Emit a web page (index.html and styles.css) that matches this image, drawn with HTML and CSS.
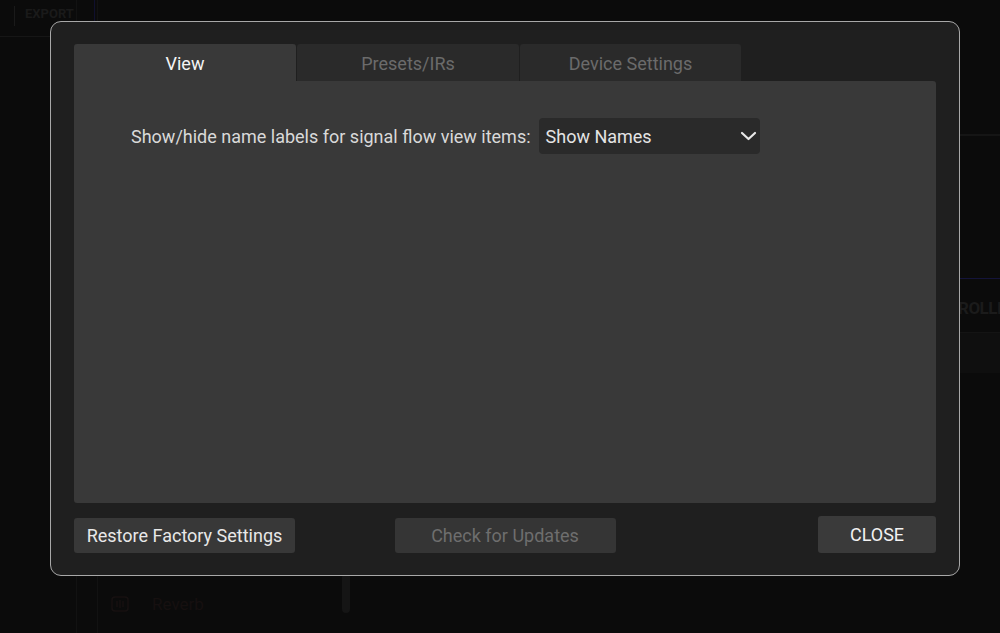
FILE: index.html
```html
<!DOCTYPE html>
<html>
<head>
<meta charset="utf-8">
<title>Settings</title>
<link rel="stylesheet" href="styles.css">
</head>
<body>
<div class="app">
  <aside class="sidebar">
    <div class="sb-head"><span class="sb-sep"></span><span class="sb-b">EXPORT</span></div>
    <div class="sb-body"></div>
  </aside>
  <div class="rail"><div class="rail-accent"></div></div>
  <main class="main">
    <div class="main-mid">
      <div class="mid-center"></div>
      <div class="mid-right">
        <div class="mr-head"></div>
        <div class="mr-accent"></div>
        <div class="mr-title">ROLLI</div>
        <div class="mr-box"></div>
      </div>
    </div>
    <div class="main-bottom">
      <div class="fx-row">
        <svg class="fx-icon" width="20" height="20" viewBox="0 0 20 20"><rect x="2" y="3" width="16" height="14" rx="3" fill="none" stroke="#171111" stroke-width="1.5"/><path d="M7 7v6M10 6v8M13 7v6" stroke="#171111" stroke-width="1.5"/></svg>
        <span class="fx-name">Reverb</span>
      </div>
      <div class="scroll"></div>
    </div>
  </main>
</div>

<div class="dialog">
  <div class="tabs">
    <div class="tab active">View</div>
    <div class="tab">Presets/IRs</div>
    <div class="tab last">Device Settings</div>
  </div>
  <div class="panel">
    <div class="row">
      <span class="label">Show/hide name labels for signal flow view items:</span>
      <div class="select">
        <span class="select-text">Show Names</span>
        <svg class="chev" width="17" height="10" viewBox="0 0 17 10"><path d="M2 2l6.5 6 6.5-6" fill="none" stroke="#e8e8e8" stroke-width="2.2" stroke-linecap="round" stroke-linejoin="round"/></svg>
      </div>
    </div>
  </div>
  <div class="footer">
    <button class="btn restore">Restore Factory Settings</button>
    <button class="btn check">Check for Updates</button>
    <button class="btn close">CLOSE</button>
  </div>
</div>
</body>
</html>
```

FILE: styles.css
```css
html, body {
  margin: 0;
  padding: 0;
}
body {
  width: 1000px;
  height: 633px;
  overflow: hidden;
  background: #0b0b0b;
  font-family: Roboto, "Liberation Sans", sans-serif;
  position: relative;
}

/* background app (faint) */
.app {
  display: flex;
  height: 633px;
}
.sidebar {
  width: 76px;
  border-right: 1px solid #121212;
  display: flex;
  flex-direction: column;
}
.sb-head {
  height: 37px;
  border-bottom: 1px solid #161616;
  display: flex;
  align-items: flex-start;
  padding: 6px 0 0 14px;
  box-sizing: border-box;
  font-size: 13px;
  font-weight: 700;
  color: #1a1a1a;
}
.sb-sep { width: 1px; height: 20px; background: #1a1a1a; margin: 0 10px 0 0; }
.rail {
  width: 20px;
  border-right: 1px solid #121212;
  position: relative;
}
.rail-accent {
  position: absolute;
  right: 2px;
  top: 0;
  width: 1px;
  height: 22px;
  background: #10102e;
}
.main {
  flex: 1;
  display: flex;
  flex-direction: column;
}
.main-mid {
  flex: 1;
  display: flex;
}
.mid-center { flex: 1; }
.mid-right {
  width: 42px;
  display: flex;
  flex-direction: column;
}
.mr-head {
  height: 134px;
  border-bottom: 2px solid #151515;
}
.mr-accent {
  margin-top: 142px;
  height: 1px;
  background: #14143a;
}
.mr-title {
  margin-top: 19px;
  font-size: 17px;
  font-weight: 700;
  color: #1b1b1b;
  letter-spacing: -0.5px;
  white-space: nowrap;
  overflow: hidden;
}
.mr-box {
  margin-top: 14px;
  height: 40px;
  background: #0f0f0f;
  border-top: 1px solid #141414;
}
.main-bottom {
  height: 60px;
  display: flex;
  align-items: flex-start;
}
.fx-row {
  display: flex;
  align-items: center;
  gap: 22px;
  margin-left: 12px;
  margin-top: 21px;
  width: 232px;
}
.fx-name {
  font-size: 17px;
  color: #161010;
}
.scroll {
  width: 8px;
  height: 40px;
  border-radius: 4px;
  background: #151515;
}

/* dialog */
.dialog {
  position: absolute;
  left: 50px;
  top: 21px;
  width: 910px;
  height: 555px;
  box-sizing: border-box;
  border: 1px solid #a8a8a8;
  border-radius: 11px;
  background: #1f1f1f;
  padding: 22px 23px 22px 23px;
  display: flex;
  flex-direction: column;
}
.tabs {
  display: flex;
  gap: 1px;
  height: 37px;
  flex: none;
}
.tab {
  width: 222px;
  background: #2a2a2a;
  border-radius: 3px 3px 0 0;
  color: #6b6b6b;
  font-size: 18px;
  font-weight: 400;
  display: flex;
  align-items: center;
  justify-content: center;
  padding-top: 1px;
  box-sizing: border-box;
}
.tab.last { width: 221px; }
.tab.active {
  background: #393939;
  color: #f4f4f4;
}
.panel {
  flex: 1;
  background: #393939;
  border-radius: 0 3px 3px 3px;
  padding: 37px 57px 0 57px;
}
.row {
  display: flex;
  align-items: center;
  gap: 8px;
}
.label {
  font-size: 18px;
  color: #d9d9d9;
}
.select {
  width: 221px;
  height: 36px;
  box-sizing: border-box;
  background: #2a2a2a;
  border-radius: 4px;
  display: flex;
  align-items: center;
  justify-content: space-between;
  padding: 0 3px 0 7px;
}
.select-text {
  font-size: 18px;
  color: #e4e4e4;
}
.chev { display: block; }
.footer {
  flex: none;
  margin-top: 13px;
  display: grid;
  grid-template-columns: 1fr auto 1fr;
  align-items: end;
}
.btn {
  font-family: Roboto, "Liberation Sans", sans-serif;
  font-size: 18px;
  border: none;
  border-radius: 3px;
  height: 35px;
  padding: 0;
  margin: 0;
}
.restore {
  justify-self: start;
  width: 221px;
  background: #383838;
  color: #e8e8e8;
}
.check {
  justify-self: center;
  width: 221px;
  background: #353535;
  color: #6e6e6e;
}
.close {
  justify-self: end;
  width: 118px;
  height: 37px;
  background: #3a3a3a;
  color: #f2f2f2;
}
```
